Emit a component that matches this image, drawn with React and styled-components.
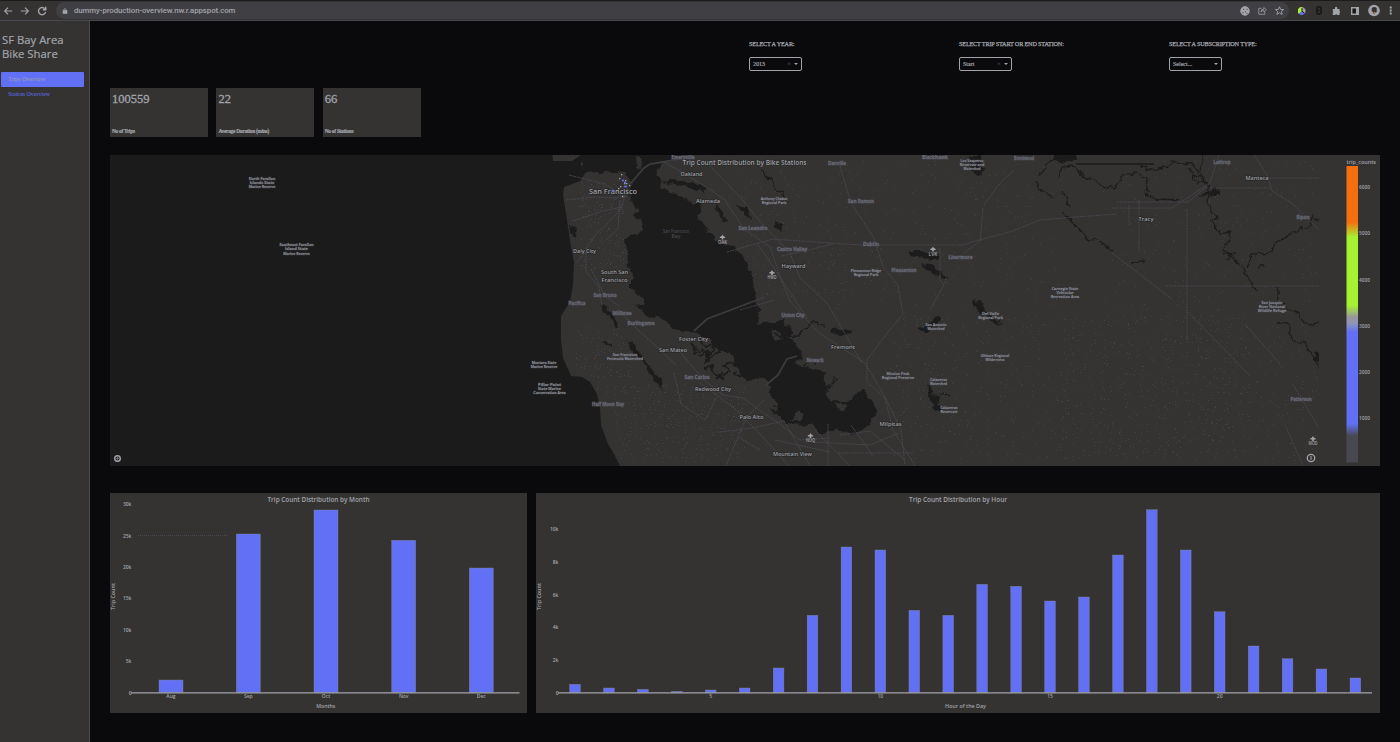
import React from "react";
import styled, { createGlobalStyle } from "styled-components";

const c = {
  page: "#0a0a0c", panel: "#343332", water: "#1b1b1b", text: "#a2a4aa",
  line: "#484850", blue: "#6170f4", orange: "#f56e10", green: "#a6f130",
};

const Global = createGlobalStyle`
  * { box-sizing: border-box; }
  body { margin: 0; background: ${c.page}; color: ${c.text}; font-family: "Open Sans", "Noto Sans", sans-serif; }
  svg text { font-family: "Open Sans", "Noto Sans", sans-serif; font-weight: 600; }
`;
const Window = styled.div`display: flex; flex-direction: column; width: 1400px; height: 742px; overflow: hidden;`;
const BrowserBar = styled.header`
  height: 21px; flex: none; display: flex; align-items: center;
  background: ${c.panel}; border-top: 1px solid #1b1b1b; border-bottom: 1px solid ${c.line};
`;
const NavIcons = styled.div`width: 56px; display: flex; gap: 7px; padding-left: 3px;`;
const Address = styled.div`
  width: 1233px; height: 17px; border-radius: 9px; padding: 0 5px 0 6px;
  display: flex; align-items: center; background: #403f44;
`;
const Url = styled.span`
  flex: 1; margin-left: 6px; font: 500 7.8px Roboto, sans-serif; letter-spacing: -0.06px; color: ${c.text};
`;
const IconRow = styled.div`display: flex; align-items: center; gap: ${(p) => p.$gap}px; margin-left: ${(p) => p.$ml || 0}px;`;
const Body = styled.div`flex: 1; display: flex; min-height: 0;`;
const Sidebar = styled.aside`
  width: 90px; flex: none; background: ${c.panel}; border-right: 1px solid ${c.line};
  padding: 12px 5px 0 1px;
`;
const Brand = styled.h1`margin: 0 0 11px; font-size: 11.3px; line-height: 14px; font-weight: 500; white-space: nowrap; padding-left: 1px; -webkit-text-stroke: 0.2px ${c.text};`;
const NavLink = styled.div`
  height: 15px; padding-left: 7px; border-radius: 1px; font: 6px/15px "Liberation Serif", serif;
  background: ${(p) => (p.$active ? c.blue : "transparent")};
  color: ${(p) => (p.$active ? c.text : c.blue)};
`;
const Main = styled.main`flex: 1; padding: 18px 20px 0 20px; display: flex; flex-direction: column;`;
const Filters = styled.div`display: grid; grid-template-columns: repeat(3, 210px); padding-left: 639px; height: 49px; flex: none;`;
const FilterLabel = styled.div`
  font: 6.2px/10px "Liberation Serif", serif; letter-spacing: -0.17px; white-space: nowrap; -webkit-text-stroke: 0.25px ${c.text};
`;
const Select = styled.div`
  margin-top: 8px; width: 53px; height: 14px; border: 1px solid ${c.text}; border-radius: 2px;
  display: flex; align-items: center; padding: 0 3px; font: 6px "Liberation Serif", serif; -webkit-text-stroke: 0.2px ${c.text};
`;
const Value = styled.span`flex: 1;`;
const Clear = styled.span`color: #65656b; -webkit-text-stroke: 0; font-size: 7px; margin-right: 3px;`;
const Caret = styled.i`border: 2px solid transparent; border-top-color: ${c.text}; border-bottom: 0;`;
const Cards = styled.div`display: flex; gap: 8.6px; height: 49px; flex: none;`;
const Card = styled.div`
  width: 97.8px; background: ${c.panel}; padding: 4px 2px 3px; display: flex; flex-direction: column; justify-content: space-between;
  font-family: "Liberation Serif", serif;
`;
const Number = styled.div`font-size: 12.5px; line-height: 14px; -webkit-text-stroke: 0.3px ${c.text};`;
const Caption = styled.div`font-size: 5.3px; line-height: 6px; font-weight: 700; letter-spacing: -0.24px; -webkit-text-stroke: 0.2px ${c.text};`;
const MapPanel = styled.section`height: 311px; margin-top: 18px; flex: none; background: ${c.panel}; svg { display: block; }`;
const Charts = styled.section`display: flex; gap: 9px; margin-top: 27px; height: 220px; flex: none;`;
const ChartPanel = styled.div`width: ${(p) => p.$w}px; background: ${c.panel}; svg { display: block; }`;

const Ico = ({ children, s = 9 }) => (
  <svg width={s} height={s} viewBox="0 0 12 12" fill="none" stroke={c.text} strokeWidth="1.4">{children}</svg>
);

const majorLabels = [
  ["San Francisco", 613, 194, 48, 7], ["Oakland", 691.5, 176.3, 22, 6], ["Alameda", 708, 202.8, 24, 6],
  ["Daly City", 584.5, 253.3, 23, 6], ["South San", 614.5, 274.3, 27, 6], ["Francisco", 614.5, 282, 26, 6],
  ["Hayward", 793.5, 268, 24, 6], ["Foster City", 693.5, 341, 29, 6], ["San Mateo", 673, 352, 28, 6],
  ["Redwood City", 713, 390.8, 36, 6], ["Palo Alto", 751.5, 419, 24, 6], ["Mountain View", 792.5, 456, 39, 6],
  ["Fremont", 843, 349, 24, 6], ["Milpitas", 890.5, 426.4, 22, 6], ["Tracy", 1146, 220.8, 15, 6], ["Manteca", 1257, 180, 23, 6],
];
const minorLabels = [
  ["San Leandro", 753, 230, 29], ["Castro Valley", 792, 250.5, 30], ["San Bruno", 605, 297, 23], ["Pacifica", 577, 305, 17],
  ["Millbrae", 622, 315, 19], ["Burlingame", 641, 325, 27], ["San Carlos", 697, 378.5, 25], ["Half Moon Bay", 608, 406, 32],
  ["Union City", 793, 316.5, 23], ["Newark", 815, 361.5, 17], ["Danville", 837, 164.5, 18], ["San Ramon", 861, 203, 26],
  ["Dublin", 871, 245.5, 16], ["Livermore", 960.5, 259, 24], ["Pleasanton", 904, 272, 25], ["Lathrop", 1222, 164, 17],
  ["Ripon", 1303, 218.5, 13], ["Patterson", 1301, 400.5, 21], ["Brentwood", 1024, 159.5, 20],
  ["Emeryville", 683, 158.6, 23], ["Blackhawk", 935, 158.8, 26],
];
const parkLabels = [
  [262, 179.5, ["North Farallon", "Islands State", "Marine Reserve"]],
  [296.5, 246, ["Southeast Farallon", "Island State", "Marine Reserve"]],
  [544, 363.5, ["Montara State", "Marine Reserve"]],
  [549.5, 385.5, ["Pillar Point", "State Marine", "Conservation Area"]],
  [625, 356, ["San Francisco", "Peninsula Watershed"]],
  [774, 199.5, ["Anthony Chabot", "Regional Park"]],
  [972, 161.5, ["Los Vaqueros", "Reservoir and", "Watershed"]],
  [866, 272, ["Pleasanton Ridge", "Regional Park"]],
  [1065, 289.5, ["Carnegie State", "Vehicular", "Recreation Area"]],
  [936, 326, ["San Antonio", "Watershed"]],
  [990.5, 315, ["Del Valle", "Regional Park"]],
  [995, 357, ["Ohlone Regional", "Wilderness"]],
  [898, 375, ["Mission Peak", "Regional Preserve"]],
  [938.5, 381, ["Calaveras", "Watershed"]],
  [949, 408.5, ["Calaveras", "Reservoir"]],
  [1272, 303.5, ["San Joaquin", "River National", "Wildlife Refuge"]],
];
const airports = [["OAK", 722.5, 237], ["HWD", 772, 272.5], ["LVK", 933, 249], ["NUQ", 810.5, 435.5], ["MOD", 1313, 438.5]];

const pacific = "M100 150H552L553 161L572 161L581 155V168L586 172L580 181L564 187L563 195L567 220L571 247L574 262L573 285L570 302L561 316L561 340L563 358L571 376L582 377L590 382L597 394L600 408L601 425L608 444L614 454L620 466V475H100Z";
const bay = "M581 150H690L683 155L676 160L662 163L655 173L661 180L660 187L674 194L692 202L701 204L698 216L706 229L717 241L734 247L745 260L752 278L756 296L760 310L758 324L770 322L779 322L785 318L782 327L768 333L776 340L787 336L800 350L804 358L793 363L801 366L812 369L826 373L824 381L830 387L826 399L842 403L852 400L856 394L863 389L870 399L877 411L872 421L865 429L850 434L836 429L822 434L810 425L786 424L778 414L777 405L771 397L768 382L762 377L749 381L740 377L739 369L733 366L733 355L724 350L713 347L708 339L697 334L684 331L674 329L663 319L645 316L636 305L646 303L637 293L628 286L635 276L629 267L628 249L626 239L643 230L642 222L634 216L638 208L631 201L630 190L632 182L624 173L609 171L587 173L581 168Z";
const landShapes = [
  "M636 155L643 157L641 170L637 168Z", "M701 213L713 211L728 219L732 239L719 240L709 231Z",
  "M790 421L800 410L804 414L800 421Z", "M834 404L848 405L842 412Z",
];
const ponds = [
  "M601 305L607 307L620 325L617 326L604 311Z", "M626 340L631 342L645 362L661 379L664 389L658 386L646 368L634 352Z",
  "M602 341L611 343L611 347Z", "M570 225L577 226L576 238L570 233Z", "M715 205L721 211L728 222L723 222L718 213Z",
  "M678 180L699 184L707 193L699 190L690 187L661 183Z",
  "M831 327L840 330L853 329L850 334L841 336L831 332Z", "M778 324L791 326L792 336L783 337L776 331Z",
  "M910 251L921 251L932 254L936 259L922 257L910 255Z", "M921 264L931 265L941 274L949 279L944 279L932 272Z",
  "M933 317L938 316L939 322L928 332L922 332L917 329L929 324Z", "M971 301L980 300L985 310L1002 325L998 325L984 316Z",
  "M929 385L933 394L941 396L939 406L942 410L935 410L929 398L927 389Z", "M969 156L981 156L979 167L986 169L978 175L972 172Z",
  "M1053 152H1077L1076 159L1063 163L1053 160Z", "M1198 196L1218 187L1219 195L1209 195Z", "M1315 352H1319V362L1313 360Z",
  "M775 221L779 224L785 225L782 232L775 227Z", "M740 205L748 208L752 220L743 214L737 205Z", "M930 256L938 255L937 260H929Z",
];
const creeks = [
  "M1053 160L1038 176M1036 180L1040 189L1053 198M1062 212L1077 226L1087 238L1101 242L1112 250M1058 179L1062 167L1074 166L1084 177L1101 185L1114 189L1122 175L1136 174L1148 179L1146 195L1160 199L1181 200M1141 164L1148 170L1166 168L1171 162L1193 164L1198 172L1204 165V155M1192 174L1202 176L1209 187L1207 202L1217 217L1211 220L1217 230L1221 233L1231 231L1229 241L1223 250L1233 257L1244 269L1249 280L1258 291M1247 267L1253 254L1272 252L1275 243L1286 238L1298 230L1310 226L1312 215L1319 221M1277 323L1289 323L1292 340L1305 343L1313 357L1319 368M1280 303L1300 315L1308 326L1319 322M1190 168L1196 184L1206 180M1222 255L1233 253L1226 260M1258 266L1265 266M1277 287L1279 300",
  "M765 329L778 337L798 336L815 321L825 326M824 387L837 381L834 376L830 390M797 405L805 404L809 412M801 368L811 362L816 365M770 410L786 412L784 420",
  "M762 170L771 181L777 191L784 193L786 204M769 181L763 171M1062 191L1071 207L1066 202",
  "M939 393L950 397M1131 264L1145 261",
];
const sloughs = "M690 343L697 348L694 354L702 350L709 355L714 347M701 340L706 347L716 346M699 357L707 352L708 362M704 363L712 357L720 349M703 368L711 367L716 375L723 378L729 372L724 365L733 363M716 380L722 374M734 371L740 378M772 405L780 407L785 415M774 412L786 418";
const roads = [
  "M566 200L595 197L613 198L628 196M573 221L603 211L622 207M586 249L595 235L606 225L621 209L627 188M576 263L586 252V272L599 287L602 306M620 200L618 229L606 240M569 175L605 184L625 197M591 269L605 296L619 306M618 309L638 330L655 345L676 365M677 348L691 365L703 379L723 395L743 398L759 410L780 424L800 440L830 438",
  "M664 162L692 178L724 199L744 229L770 247L781 279L790 301L819 333L865 363L885 397L901 430L905 465M710 166L740 197L758 219L790 253L800 278L827 303L862 363M727 252L773 239L829 243L860 245H909H963L975 241L1013 231L1040 220L1075 217L1117 214M840 166L851 203L874 238L883 267L898 285L903 314L884 337L867 360V382L885 398",
  "M782 256L813 249L832 244M757 243L782 280L807 318M740 310L775 300M700 383L734 408L760 434L788 465M674 373L681 404L705 420L717 397M720 432L752 428L784 421L810 466M738 437L760 450M764 400L746 418L726 466M828 424V466M840 435L870 431L905 460M851 425L873 456M838 453H913M812 442L870 445L899 433M885 398L893 430L915 466M815 430L850 466M775 440L830 452",
  "M1112 208H1172L1210 183L1219 155M1112 253L1172 299M1117 202H1188M1187 209V340M1129 205V225M1139 200V250M1166 286H1319M1210 188H1270M1254 155L1267 175L1272 191L1293 204L1319 230M1186 310L1250 376M1285 425L1303 465M1245 324L1280 364M1294 386L1319 428M983 208L980 241L963 254M984 205L999 184L1014 170M940 248V280L944 285L930 310M1188 202L1206 187M1256 178H1319",
];

let seed = 71;
const rand = () => ((seed = (seed * 16807) % 2147483647) / 2147483647);
const speckle = (n, x, y, w, h) =>
  Array.from({ length: n }, () => `M${Math.round(x + rand() * w)} ${Math.round(y + rand() * h)}h1v1h-1z`).join("");
const trails = [
  speckle(330, 615, 385, 130, 78), speckle(120, 576, 325, 55, 70), speckle(620, 1060, 315, 190, 145),
  speckle(300, 890, 315, 180, 145), speckle(230, 830, 160, 230, 150), speckle(180, 1100, 160, 215, 150), speckle(110, 1240, 320, 76, 140),
  speckle(160, 580, 180, 45, 90), speckle(140, 740, 170, 110, 130),
].join("");

function TripMap() {
  return (
    <svg width="1270" height="311" viewBox="110 155 1270 311">
      <defs>
        <linearGradient id="scale" x1="0" y1="0" x2="0" y2="1">
          <stop offset="0" stopColor={c.orange} /><stop offset=".19" stopColor={c.orange} />
          <stop offset=".24" stopColor={c.green} /><stop offset=".47" stopColor={c.green} />
          <stop offset=".51" stopColor="#96979c" /><stop offset=".53" stopColor="#9095b5" />
          <stop offset=".56" stopColor={c.blue} /><stop offset=".87" stopColor={c.blue} />
          <stop offset=".91" stopColor={c.line} /><stop offset="1" stopColor={c.line} />
        </linearGradient>
        <clipPath id="tiles"><rect x="110" y="154" width="1209" height="313" /></clipPath>
        <filter id="shoreline" filterUnits="userSpaceOnUse" x="110" y="145" width="1220" height="330">
          <feTurbulence type="fractalNoise" baseFrequency="0.13" numOctaves="3" seed="4" />
          <feDisplacementMap in="SourceGraphic" scale="7" xChannelSelector="R" yChannelSelector="G" />
        </filter>
      </defs>
      <g clipPath="url(#tiles)">
        <path d={trails} fill={c.line} opacity=".75" />
        <path d={pacific} fill={c.water} />
        <g filter="url(#shoreline)">
          <path d={bay} fill={c.water} />
          {landShapes.map((d) => <path key={d} d={d} fill={c.panel} />)}
          {ponds.map((d) => <path key={d} d={d} fill={c.water} />)}
          {creeks.map((d) => <path key={d} d={d} fill="none" stroke={c.water} strokeWidth="1.3" />)}
          <path d={sloughs} fill="none" stroke={c.water} strokeWidth="1.8" />
        </g>
        <path d="M1076 164H1154" stroke={c.water} strokeWidth="1.5" />
        {roads.map((d) => <path key={d} d={d} fill="none" stroke={c.line} strokeWidth=".9" strokeDasharray="2 .7" />)}
        <path d="M631 183L644 168L650 164L680 159M694 331L707 319L765 297M766 385L778 375L787 359L797 356" fill="none" stroke="#3d3c3c" strokeWidth="1.8" />
      </g>
      <g fill={c.line} fontSize="5" textAnchor="middle">
        <text x="676" y="232.5" textLength="26" lengthAdjust="spacingAndGlyphs">San Francisco</text>
        <text x="676" y="238">Bay</text>
      </g>
      {minorLabels.map(([t, x, y, w]) => (
        <text key={t} x={x} y={y} fill="#70707a" stroke={c.line} strokeWidth="1" paintOrder="stroke" fontSize="4.7" textAnchor="middle" textLength={w} lengthAdjust="spacingAndGlyphs">{t}</text>
      ))}
      {parkLabels.map(([x, y, rows]) => rows.map((t, i) => (
        <text key={t + y} x={x} y={y + i * 4.4} fill="#94969c" fontSize="4.1" textAnchor="middle" textLength={t.length * 1.9} lengthAdjust="spacingAndGlyphs" stroke={c.line} strokeWidth=".7" paintOrder="stroke">{t}</text>
      )))}
      {majorLabels.map(([t, x, y, w, s]) => (
        <text key={t} x={x} y={y} fill={c.text} stroke="#1b1b1b" strokeWidth=".8" paintOrder="stroke" fontSize={s} textAnchor="middle" textLength={w} lengthAdjust="spacingAndGlyphs">{t}</text>
      ))}
      {airports.map(([t, x, y]) => (
        <g key={t} fill={c.text}>
          <path d={`M${x} ${y - 2.5}l.8 1.5 1.9 1v1h-1.9v1.5h-1.6v-1.5h-1.9v-1l1.9-1z`} />
          <text x={x} y={y + 6.7} fontSize="4.6" textAnchor="middle" textLength="9" lengthAdjust="spacingAndGlyphs">{t}</text>
        </g>
      ))}
      {[[621, 174], [619, 178], [625, 180], [624, 183], [629, 185], [620, 186], [618, 188], [626, 183], [622, 196]].map(([x, y]) => (
        <rect key={x + "-" + y} x={x} y={y} width="1.3" height="1.3" fill={c.text} />
      ))}
      <path d="M622 180.5h2M624 182.5h2M624 186.5h3M612 190.5h2" stroke={c.blue} strokeWidth="1.3" />
      <text x="744.5" y="165.3" fill={c.text} fontSize="6.6" textAnchor="middle" textLength="124" lengthAdjust="spacingAndGlyphs" stroke={c.water} strokeWidth=".6" paintOrder="stroke">Trip Count Distribution by Bike Stations</text>
      <g fill="none" stroke={c.text}>
        <circle cx="117.5" cy="458.5" r="2.8" strokeWidth="1.4" /><circle cx="117.5" cy="458.5" r=".7" />
        <circle cx="1311" cy="458" r="3.7" strokeWidth="1.3" /><path d="M1311 456v4" strokeWidth="1" />
      </g>
      <rect x="1346.5" y="166" width="11.5" height="296.5" fill="url(#scale)" />
      <g fill={c.text} fontSize="5.4">
        <text x="1346.5" y="163.7" textLength="29.5" lengthAdjust="spacingAndGlyphs">trip_counts</text>
        {[6000, 5000, 4000, 3000, 2000, 1000].map((v, i) => (
          <text key={v} x="1359" y={189.2 + i * 46.2} fontSize="5" textLength="11" lengthAdjust="spacingAndGlyphs">{v}</text>
        ))}
      </g>
    </svg>
  );
}

function BarChart({ left, width, title, titleW, xTitle, xTitleW, axis, bars, barW, yTicks, xTicks, grid }) {
  const base = 692.5;
  const mid = (axis[0] + axis[1]) / 2;
  return (
    <svg width={width} height="220" viewBox={`${left} 493 ${width} 220`}>
      {grid && <path d="M138 535.5H228" stroke={c.line} strokeDasharray="1 1" />}
      {bars.map(([x, top]) => (
        <rect key={x} x={x - barW / 2} y={top} width={barW} height={base - top} fill={c.blue} stroke="#85868f" strokeWidth=".4" />
      ))}
      <path d={`M${axis[0]} ${base + 0.3}H${axis[1]}`} stroke={c.text} strokeWidth="1.2" />
      <g fill={c.text} fontSize="5">
        {yTicks.map(([t, y]) => <text key={t} x={axis[0] + 0.5} y={y + 2} textAnchor="end">{t}</text>)}
        {xTicks.map(([t, x]) => <text key={t} x={x} y="697.9" textAnchor="middle">{t}</text>)}
        <text x={mid + 0.5} y="708.2" fontSize="5.6" textAnchor="middle" textLength={xTitleW} lengthAdjust="spacingAndGlyphs">{xTitle}</text>
        <text transform={`translate(${left + 5.2} 596.5) rotate(-90)`} fontSize="5.6" textAnchor="middle" textLength="27" lengthAdjust="spacingAndGlyphs">Trip Count</text>
        <text x={left + width / 2} y="501.6" fontSize="6.5" textAnchor="middle" textLength={titleW} lengthAdjust="spacingAndGlyphs">{title}</text>
      </g>
    </svg>
  );
}

const months = [["Aug", 171, 680], ["Sep", 248.3, 534], ["Oct", 326, 510], ["Nov", 403.7, 540.3], ["Dec", 481.3, 568]];
const hourTops = [684.3, 688, 689.3, 691.3, 690, 688, 668, 615.3, 547, 550, 610.3, 615.3, 584.3, 586.3, 601, 597, 555, 509.7, 550, 611.7, 646, 658.7, 669, 678];
const hourX = (h) => 575 + (h - 1) * 33.93;

const filters = [["SELECT A YEAR:", "2013", true], ["SELECT TRIP START OR END STATION:", "Start", true], ["SELECT A SUBSCRIPTION TYPE:", "Select...", false]];
const stats = [["100559", "No of Trips"], ["22", "Average Duration (mins)"], ["66", "No of Stations"]];

export default function App() {
  return (
    <Window>
      <Global />
      <BrowserBar>
        <NavIcons>
          <Ico s={10}><path d="M11 6H2M6 2L2 6l4 4" /></Ico>
          <Ico s={10}><path d="M1 6h9M6 2l4 4-4 4" /></Ico>
          <Ico s={10}><path d="M9.5 3.5A4.3 4.3 0 1 0 10.3 7M10.5 1v3.5H7" strokeWidth="1.7" /></Ico>
        </NavIcons>
        <Address>
          <Ico s={6}><path d="M2 5h8v6H2z" fill={c.text} /><path d="M3.7 5V2.5Q6 0 8.3 2.5V5" /></Ico>
          <Url>dummy-production-overview.nw.r.appspot.com</Url>
          <IconRow $gap={8}>
            <Ico s={10}><circle cx="6" cy="6" r="5" fill={c.text} /><path d="M4 4h1M8 4h1M6 7h1M3 8h1M8 9h1" stroke="#403f44" /></Ico>
            <Ico><path d="M5 3H1v8h8V8M4 8q0-4 4-4V2l3 3-3 3V6q-3 0-4 2z" strokeWidth="1" /></Ico>
            <Ico s={9}><path d="M6 1l1.5 3.5 4 .3-3 2.5 1 4L6 9l-3.5 2.3 1-4-3-2.5 4-.3z" strokeWidth="1.2" /></Ico>
          </IconRow>
        </Address>
        <IconRow $gap={9.2} $ml={9}>
          <svg width="8" height="8" viewBox="0 0 8 8"><path d="M4 0a4 4 0 0 0-3 7l3-3z" fill={c.green} /><path d="M1 7a4 4 0 0 0 6-1L4 4z" fill={c.blue} /><path d="M4 0a4 4 0 0 1 3 6L4 4z" fill={c.text} /><path d="M4 1v3l2 2" stroke="#1b1b1b" fill="none" /></svg>
          <svg width="8" height="9" viewBox="0 0 8 9"><rect x="1" y="0" width="6" height="9" rx="2.5" fill="#1b1b1b" /><path d="M3 3h2M3 6h2" stroke={c.line} /></svg>
          <svg width="9" height="9" viewBox="0 0 12 12"><path d="M1 4h3V2q1.5-2 3 0v2h3v3q2 1 0 2.5V12H7q-1-2-3 0H1V9q2-1 0-2z" fill={c.text} /></svg>
          <svg width="8" height="8" viewBox="0 0 8 8"><path d="M.7.7h6.6v6.6H.7z" fill="#1b1b1b" stroke={c.text} strokeWidth="1.4" /><path d="M5 1h2v6H5z" fill={c.text} /></svg>
          <svg width="12" height="13" viewBox="0 0 13 13"><circle cx="6.5" cy="6.5" r="6.3" fill={c.text} /><path d="M4 4q3-2.500 5.500 0v4l-2 1-1 1.500-1-2L4 7z" fill={c.panel} /><path d="M6.3 8h1.3v1.3H6.3z" fill={c.orange} /></svg>
          <svg width="3" height="9" viewBox="0 0 3 9"><path d="M.7 .5h2v2h-2zM.7 3.5h2v2h-2zM.7 6.5h2v2h-2z" fill={c.text} /></svg>
        </IconRow>
      </BrowserBar>
      <Body>
        <Sidebar>
          <Brand>SF Bay Area<br />Bike Share</Brand>
          <NavLink $active>Trips Overview</NavLink>
          <NavLink>Station Overview</NavLink>
        </Sidebar>
        <Main>
          <Filters>
            {filters.map(([label, value, clear]) => (
              <div key={label}>
                <FilterLabel>{label}</FilterLabel>
                <Select><Value>{value}</Value>{clear && <Clear>×</Clear>}<Caret /></Select>
              </div>
            ))}
          </Filters>
          <Cards>
            {stats.map(([n, t]) => <Card key={n}><Number>{n}</Number><Caption>{t}</Caption></Card>)}
          </Cards>
          <MapPanel><TripMap /></MapPanel>
          <Charts>
            <ChartPanel $w={417}>
              <BarChart left={110} width={417} title="Trip Count Distribution by Month" titleW={102} xTitle="Months" xTitleW={19}
                axis={[131, 519.5]} barW={24} grid bars={months.map(([, x, y]) => [x, y])}
                yTicks={[["0", 692.5], ["5k", 661], ["10k", 630], ["15k", 598], ["20k", 567], ["25k", 535.7], ["30k", 504]]}
                xTicks={months.map(([t, x]) => [t, x])} />
            </ChartPanel>
            <ChartPanel $w={844}>
              <BarChart left={536} width={844} title="Trip Count Distribution by Hour" titleW={98} xTitle="Hour of the Day" xTitleW={41}
                axis={[558, 1372]} barW={10.7} bars={hourTops.map((y, i) => [hourX(i + 1), y])}
                yTicks={[["0", 692.5], ["2k", 660], ["4k", 627.3], ["6k", 594.5], ["8k", 562], ["10k", 529]]}
                xTicks={[5, 10, 15, 20].map((h) => [String(h), hourX(h)])} />
            </ChartPanel>
          </Charts>
        </Main>
      </Body>
    </Window>
  );
}
